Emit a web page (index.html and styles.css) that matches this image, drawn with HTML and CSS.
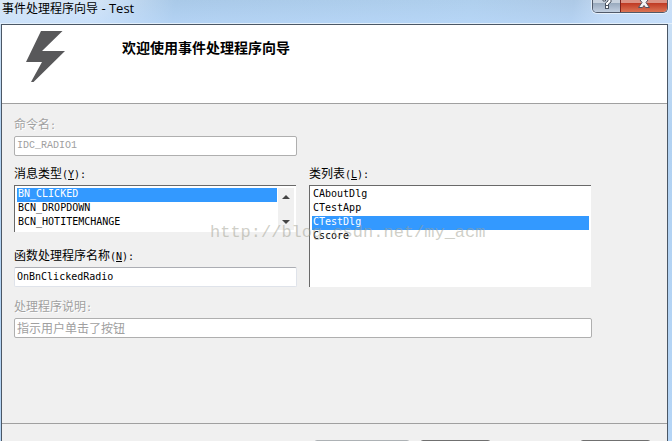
FILE: index.html
```html
<!DOCTYPE html>
<html lang="zh-CN">
<head>
    <meta charset="UTF-8">
    <meta name="viewport" content="width=device-width, initial-scale=1.0">
    <title>事件处理程序向导 - Test</title>
    <link rel="stylesheet" href="styles.css">
</head>
<body>
    <div class="window">
        <div class="titlebar">
            <span class="title">事件处理程序向导<span class="project"> - Test</span></span>
            <div class="controls">
                <button class="help" type="button" aria-label="帮助">
                    <svg width="12" height="12" viewBox="0 0 12 12">
                        <path d="M2 -2V1H4.500V-1H7V1L4.500 3V5.500H7.500V4L10 2V-2" fill="#fff" stroke="#4a5361"/>
                        <rect x="4.500" y="5.500" width="3" height="3" fill="#fff" stroke="#4a5361"/>
                    </svg>
                </button>
                <button class="close" type="button" aria-label="关闭">
                    <svg width="14" height="12" viewBox="0 0 14 12">
                        <path d="M1.500 -2L5 2.500L1.500 7.500H5.500L7 5.500L8.500 7.500H12.500L9 2.500L12.500 -2H8.500L7 0L5.500 -2Z" fill="#f4f4f4" stroke="#50515f"/>
                    </svg>
                </button>
            </div>
        </div>

        <div class="client">
            <header class="banner">
                <svg class="bolt" width="40" height="52" viewBox="0 0 40 52">
                    <path d="M15 0H36.500L16 20H39L7.500 51H5L16 31H0Z" fill="#58585a"/>
                </svg>
                <h1>欢迎使用事件处理程序向导</h1>
            </header>

            <form class="form">
                <div class="field command disabled">
                    <label for="command">命令名<span class="latin">:</span></label>
                    <input type="text" id="command" value="IDC_RADIO1" disabled>
                </div>

                <div class="field message">
                    <label for="message">消息类型<span class="latin">(<u>Y</u>):</span></label>
                    <div class="listbox">
                        <select id="message" size="3">
                            <option selected>BN_CLICKED</option>
                            <option>BCN_DROPDOWN</option>
                            <option>BCN_HOTITEMCHANGE</option>
                        </select>
                        <div class="scrollbar">
                            <button type="button" aria-label="向上滚动">
                                <svg width="8" height="4" viewBox="0 0 8 4"><path d="M4 0L8 4H0Z" fill="#444"/></svg>
                            </button>
                            <button type="button" aria-label="向下滚动">
                                <svg width="8" height="4" viewBox="0 0 8 4"><path d="M0 0H8L4 4Z" fill="#444"/></svg>
                            </button>
                        </div>
                    </div>
                </div>

                <div class="field classes">
                    <label for="classes">类列表<span class="latin">(<u>L</u>):</span></label>
                    <div class="listbox">
                        <select id="classes" size="4">
                            <option>CAboutDlg</option>
                            <option>CTestApp</option>
                            <option selected>CTestDlg</option>
                            <option>Cscore</option>
                        </select>
                    </div>
                </div>

                <div class="field handler">
                    <label for="handler">函数处理程序名称<span class="latin">(<u>N</u>):</span></label>
                    <input type="text" id="handler" value="OnBnClickedRadio">
                </div>

                <div class="field description disabled">
                    <label for="description">处理程序说明<span class="latin">:</span></label>
                    <input type="text" id="description" value="指示用户单击了按钮" disabled>
                </div>
            </form>

            <footer class="actions">
                <button class="wide" type="button" aria-label="添加并编辑" disabled></button>
                <button type="button" aria-label="完成"></button>
                <button class="cancel" type="button" aria-label="取消"></button>
            </footer>
        </div>

        <div class="watermark">http://blog.csdn.net/my_acm</div>
    </div>
</body>
</html>
```

FILE: styles.css
```css
* {
    box-sizing: border-box;
}

body {
    margin: 0;
    font-family: "Noto Sans CJK SC", sans-serif;
    font-size: 12px;
    color: #000;
}

button {
    padding: 0;
    font: inherit;
}

svg {
    display: block;
}

.window {
    position: relative;
    display: flex;
    flex-direction: column;
    height: 100vh;
    overflow: hidden;
    padding: 0 4px 0 1px;
    background: linear-gradient(#d0e3f6, #b2d2f2 30%, #b5d5f6);
}

/* Title bar */
.titlebar {
    display: flex;
    flex: none;
    justify-content: space-between;
    align-items: flex-start;
    height: 24px;
    margin: 0 -4px 0 -1px;
    padding: 0 4px 0 2px;
    border-bottom: 1px solid #e4f0fb;
    background:
        linear-gradient(rgba(255, 255, 255, 0), rgba(190, 220, 255, 0.5)),
        linear-gradient(100deg, #dbe8f5 0%, #d5e5f6 14%, #a9c9e8 26%, #afcfed 70%, #adc9e6 85%, #c6dbf3 90%, #cde0f5 100%);
}

.title {
    line-height: 16px;
}

.project {
    font-family: "Open Sans", sans-serif;
    font-size: 13px;
}

.controls {
    display: flex;
    height: 13px;
    border: 1px solid #515a6a;
    border-top: 0;
    border-radius: 0 0 5px 5px;
    box-shadow: 0 0 0 1px rgba(255, 255, 255, 0.6);
    overflow: hidden;
}

.controls button {
    display: flex;
    justify-content: center;
    border: 0;
}

.controls .help {
    width: 27px;
    background: linear-gradient(#c9d3df 25%, #98a9bd 26%, #c3d0e1);
}

.controls .close {
    width: 47px;
    border-left: 1px solid #7c211b;
    background: linear-gradient(#dc9385 25%, #bf3923 26%, #dc7555);
}

/* Dialog */
.client {
    flex: 1;
    border: 1px solid #4b5765;
    border-bottom: 0;
    background-color: #f0f0f0;
}

.banner {
    display: flex;
    gap: 56px;
    height: 79px;
    padding: 6px 24px;
    border-bottom: 1px solid #a0a0a0;
    background-color: #fff;
}

h1 {
    margin: 6px 0 0;
    font-size: 14px;
    line-height: 20px;
}

.form {
    display: grid;
    grid-template-columns: 1fr 1fr;
    grid-template-areas:
        "command ."
        "message classes"
        "handler classes"
        "description description";
    align-content: start;
    column-gap: 12px;
    min-height: 319px;
    padding: 12px 75px 0 12px;
}

.field {
    display: flex;
    flex-direction: column;
    gap: 4px;
    min-width: 0;
}

.command {
    grid-area: command;
    margin-bottom: 9px;
}

.message {
    grid-area: message;
    margin-bottom: 15px;
}

.classes {
    grid-area: classes;
}

.handler {
    grid-area: handler;
}

.description {
    grid-area: description;
    margin-top: 11px;
}

label {
    height: 16px;
    line-height: 16px;
}

.latin,
input,
select {
    font-family: "DejaVu Sans Mono", "Noto Sans CJK SC", monospace;
    font-size: 10px;
}

.disabled label {
    color: #a0a0a0;
    text-shadow: 1px 1px #fff;
}

input {
    width: 100%;
    height: 20px;
    padding: 0 2px 2px;
    border: 1px solid #dfe3ea;
    border-top-color: #abadb3;
    border-radius: 2px;
    background-color: #fff;
    color: #000;
}

input:disabled {
    border-color: #afafaf;
    color: #a0a0a0;
}

#command {
    font-family: "Liberation Mono", monospace;
}

#description {
    font-family: "Noto Sans CJK SC", sans-serif;
    font-size: 12px;
}

/* List boxes */
.listbox {
    display: flex;
    flex: 1;
    gap: 1px;
    margin-right: 1px;
    padding: 2px;
    border-top: 1px solid #696969;
    border-left: 1px solid #696969;
    background-color: #fff;
}

.message .listbox {
    height: 47px;
}

select {
    flex: 1;
    min-width: 0;
    padding: 0;
    border: 0;
    border-radius: 0;
    outline: 0;
    overflow: hidden;
    background-color: #fff;
    color: #000;
}

option {
    height: 14px;
    min-height: 14px;
    padding: 0 1px;
    line-height: 14px;
}

option:checked {
    background: #3399ff linear-gradient(#3399ff, #3399ff);
    color: #fff;
}

.scrollbar {
    display: flex;
    flex-direction: column;
    justify-content: space-between;
    width: 16px;
    height: 42px;
    background-color: #f0f0f0;
}

.scrollbar button {
    display: flex;
    justify-content: center;
    align-items: center;
    height: 17px;
    border: 0;
    background: none;
}

/* Bottom buttons */
.actions {
    display: flex;
    gap: 10px;
    padding: 16px 16px 12px 312px;
    border-top: 1px solid #a0a0a0;
}

.actions button {
    width: 71px;
    height: 23px;
    border: 1px solid #707070;
    border-radius: 3px;
    background: linear-gradient(#f2f2f2, #cfcfcf);
}

.actions button:disabled {
    border-color: #adb2b5;
    background: #f4f4f4;
}

.actions .wide {
    width: 96px;
}

.actions .cancel {
    margin-left: auto;
}

.watermark {
    position: absolute;
    top: 221px;
    left: 210px;
    font-family: "Liberation Mono", monospace;
    font-size: 17px;
    line-height: 24px;
    color: rgba(160, 160, 145, 0.5);
    pointer-events: none;
}
```
